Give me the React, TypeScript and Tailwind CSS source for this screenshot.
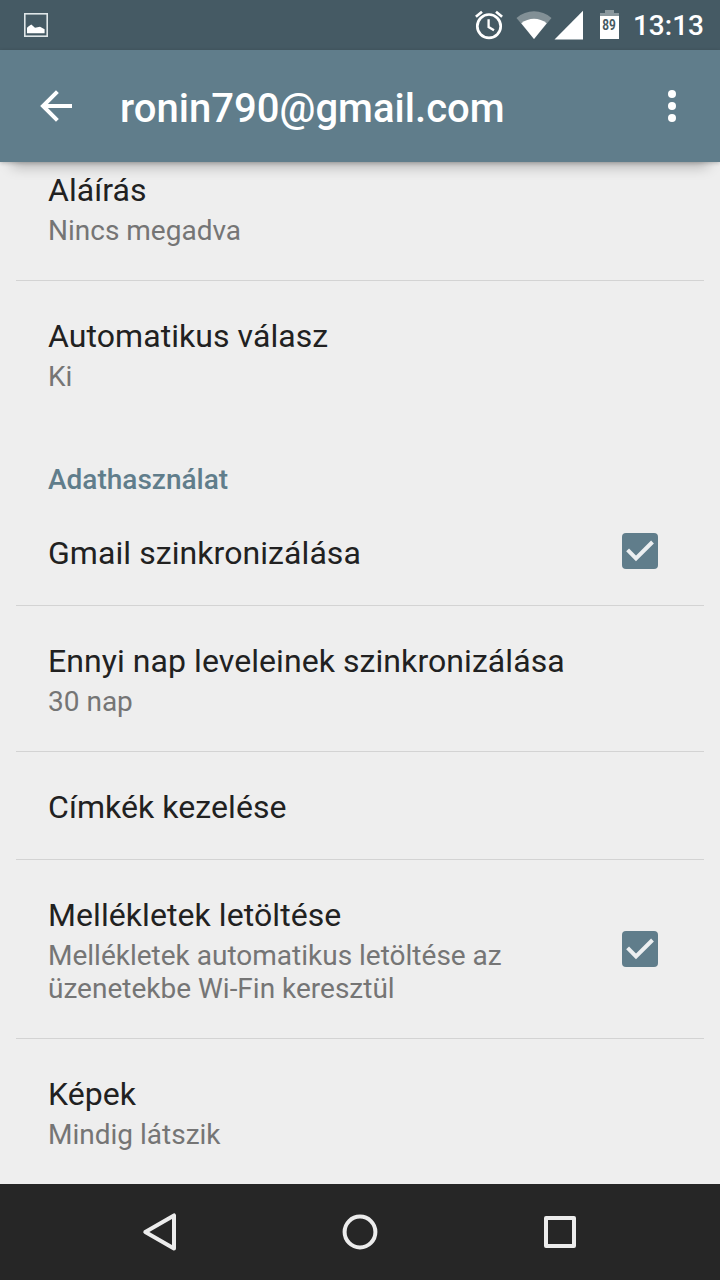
import React, { useState } from 'react';

type Setting = {
  id: string;
  title: string;
  summary?: string;
  checkbox?: boolean;
  last?: boolean;
};

const general: Setting[] = [
  { id: 'signature', title: 'Aláírás', summary: 'Nincs megadva' },
  { id: 'autoreply', title: 'Automatikus válasz', summary: 'Ki', last: true },
];

const dataUsage: Setting[] = [
  { id: 'sync', title: 'Gmail szinkronizálása', checkbox: true },
  { id: 'days', title: 'Ennyi nap leveleinek szinkronizálása', summary: '30 nap' },
  { id: 'labels', title: 'Címkék kezelése' },
  {
    id: 'attachments',
    title: 'Mellékletek letöltése',
    summary: 'Mellékletek automatikus letöltése az üzenetekbe Wi-Fin keresztül',
    checkbox: true,
  },
  { id: 'images', title: 'Képek', summary: 'Mindig látszik', last: true },
];

function StatusBar() {
  return (
    <div className="flex h-[50px] shrink-0 items-center bg-[#455a64] text-white">
      <svg className="ml-6 h-6 w-6" viewBox="0 0 24 24" fill="none">
        <rect x="0.8" y="0.8" width="22.4" height="22.4" stroke="#dfe6e8" strokeWidth="1.6" />
        <path d="M3 20.3V14.8L5 13L7.3 11.4L11 14.8L16 13.8L20.6 16.2V20.3Z" fill="#fff" />
      </svg>
      <div className="flex-1" />
      {/* alarm */}
      <svg className="h-[30px] w-[30px]" viewBox="0 0 30 30" fill="none" stroke="#fff">
        <circle cx="15" cy="16.2" r="11.7" strokeWidth="2.7" />
        <path d="M14.6 9.3V17L20 20.3" strokeWidth="2.3" />
        <path d="M1.9 6.8L8 1.8M28.1 6.8L22 1.8" strokeWidth="2.7" />
      </svg>
      {/* wifi */}
      <svg className="ml-3 h-[30px] w-9" viewBox="0 0 36 30">
        <path d="M0.5 8C10.5 -1 25.5 -1 35.5 8L18 29Z" fill="#829096" />
        <path d="M5.3 13.2C12.5 7.2 23.5 7.2 30.7 13.2L18 29Z" fill="#fff" />
      </svg>
      <svg className="ml-[2px] h-[30px] w-[30px]" viewBox="0 0 30 30">
        <path d="M0.5 29.5L29 0.8V29.5Z" fill="#fff" />
      </svg>
      {/* battery */}
      <div className="mb-px ml-4 flex w-[19px] flex-col items-center">
        <div className="h-[3px] w-[9px] bg-[#8a989e]" />
        <div className="h-[3px] w-full bg-[#8a989e]" />
        <div className="flex h-[23px] w-full justify-center bg-white text-[14px] leading-[19px] font-bold text-[#455a64]">
          <span className="scale-x-[0.84]">89</span>
        </div>
      </div>
      <span className="mr-4 ml-[14px] pt-0.5 text-[28px] leading-none font-medium">13:13</span>
    </div>
  );
}

function Header() {
  return (
    <header className="relative z-10 h-[112px] shrink-0">
      <div className="absolute inset-x-3 bottom-0 h-10 shadow-[0_4px_14px_rgba(0,0,0,0.28)]" />
      <div className="relative flex h-full items-center bg-[#607d8b] text-white shadow-[0_1px_4px_rgba(0,0,0,0.22)]">
        <button className="ml-10" aria-label="Vissza">
          <svg className="h-8 w-8" viewBox="0 0 32 32" fill="none" stroke="#fff" strokeWidth="4">
            <path d="M32 16H4M17.4 1.6L3 16L17.4 30.4" />
          </svg>
        </button>
        <h1 className="ml-12 flex-1 pt-1.5 text-[40px] leading-none font-medium tracking-[0.03px]">
          ronin790@gmail.com
        </h1>
        <button className="mr-11 flex flex-col gap-1" aria-label="Menü">
          <span className="h-2 w-2 rounded-full bg-white" />
          <span className="h-2 w-2 rounded-full bg-white" />
          <span className="h-2 w-2 rounded-full bg-white" />
        </button>
      </div>
    </header>
  );
}

function CheckBox({ checked }: { checked: boolean }) {
  if (!checked) {
    return <span className="h-9 w-9 rounded border-4 border-[#757575]" />;
  }
  return (
    <svg className="mb-px h-9 w-9" viewBox="0 0 36 36" fill="none">
      <rect width="36" height="36" rx="4" fill="#607d8b" />
      <path d="M5.6 16.8L14 25.4L30.5 9" stroke="#eceff1" strokeWidth="4" />
    </svg>
  );
}

function SettingRow({ item }: { item: Setting }) {
  const [checked, setChecked] = useState<boolean>(true);

  return (
    <div
      onClick={() => setChecked((v) => !v)}
      className={`mx-4 flex items-center pr-[46px] pl-8 ${item.last ? '' : 'border-b border-[#d3d3d3]'}`}
    >
      <div className="flex-1 pt-9 pb-[33px]">
        <div className="text-[32px] leading-[38px] tracking-[0.07px] text-[#212121]">{item.title}</div>
        {item.summary && (
          <div className="mt-[5px] w-[500px] text-[28px] leading-[33px] text-[#757575]">
            {item.summary}
          </div>
        )}
      </div>
      {item.checkbox && <CheckBox checked={checked} />}
    </div>
  );
}

function NavBar() {
  return (
    <nav className="flex h-24 shrink-0 items-center justify-between bg-[#262626] px-[140px]">
      <svg className="h-10 w-10" viewBox="0 0 40 40" fill="none" stroke="#ececec" strokeWidth="4" strokeLinejoin="round">
        <path d="M34 3.4V36.6L5.3 20Z" />
      </svg>
      <svg className="h-10 w-10" viewBox="0 0 40 40" fill="none" stroke="#ececec" strokeWidth="4">
        <circle cx="20" cy="20" r="15.4" />
      </svg>
      <svg className="h-10 w-10" viewBox="0 0 40 40" fill="none" stroke="#ececec" strokeWidth="4" strokeLinejoin="round">
        <path d="M6 6H34V34H6Z" />
      </svg>
    </nav>
  );
}

export default function App() {
  return (
    <div className="flex h-[1280px] w-[720px] flex-col overflow-hidden bg-[#eeeeee] font-['Roboto',sans-serif]">
      <StatusBar />
      <Header />
      <main className="flex-1 overflow-hidden">
        {/* list is scrolled a little under the header */}
        <div className="-mt-[27px]">
          {general.map((s) => (
            <SettingRow key={s.id} item={s} />
          ))}
          <h2 className="h-[72px] pt-[37px] pl-12 text-[28px] leading-[33px] font-medium text-[#607d8b]">
            Adathasználat
          </h2>
          {dataUsage.map((s) => (
            <SettingRow key={s.id} item={s} />
          ))}
        </div>
      </main>
      <NavBar />
    </div>
  );
}
